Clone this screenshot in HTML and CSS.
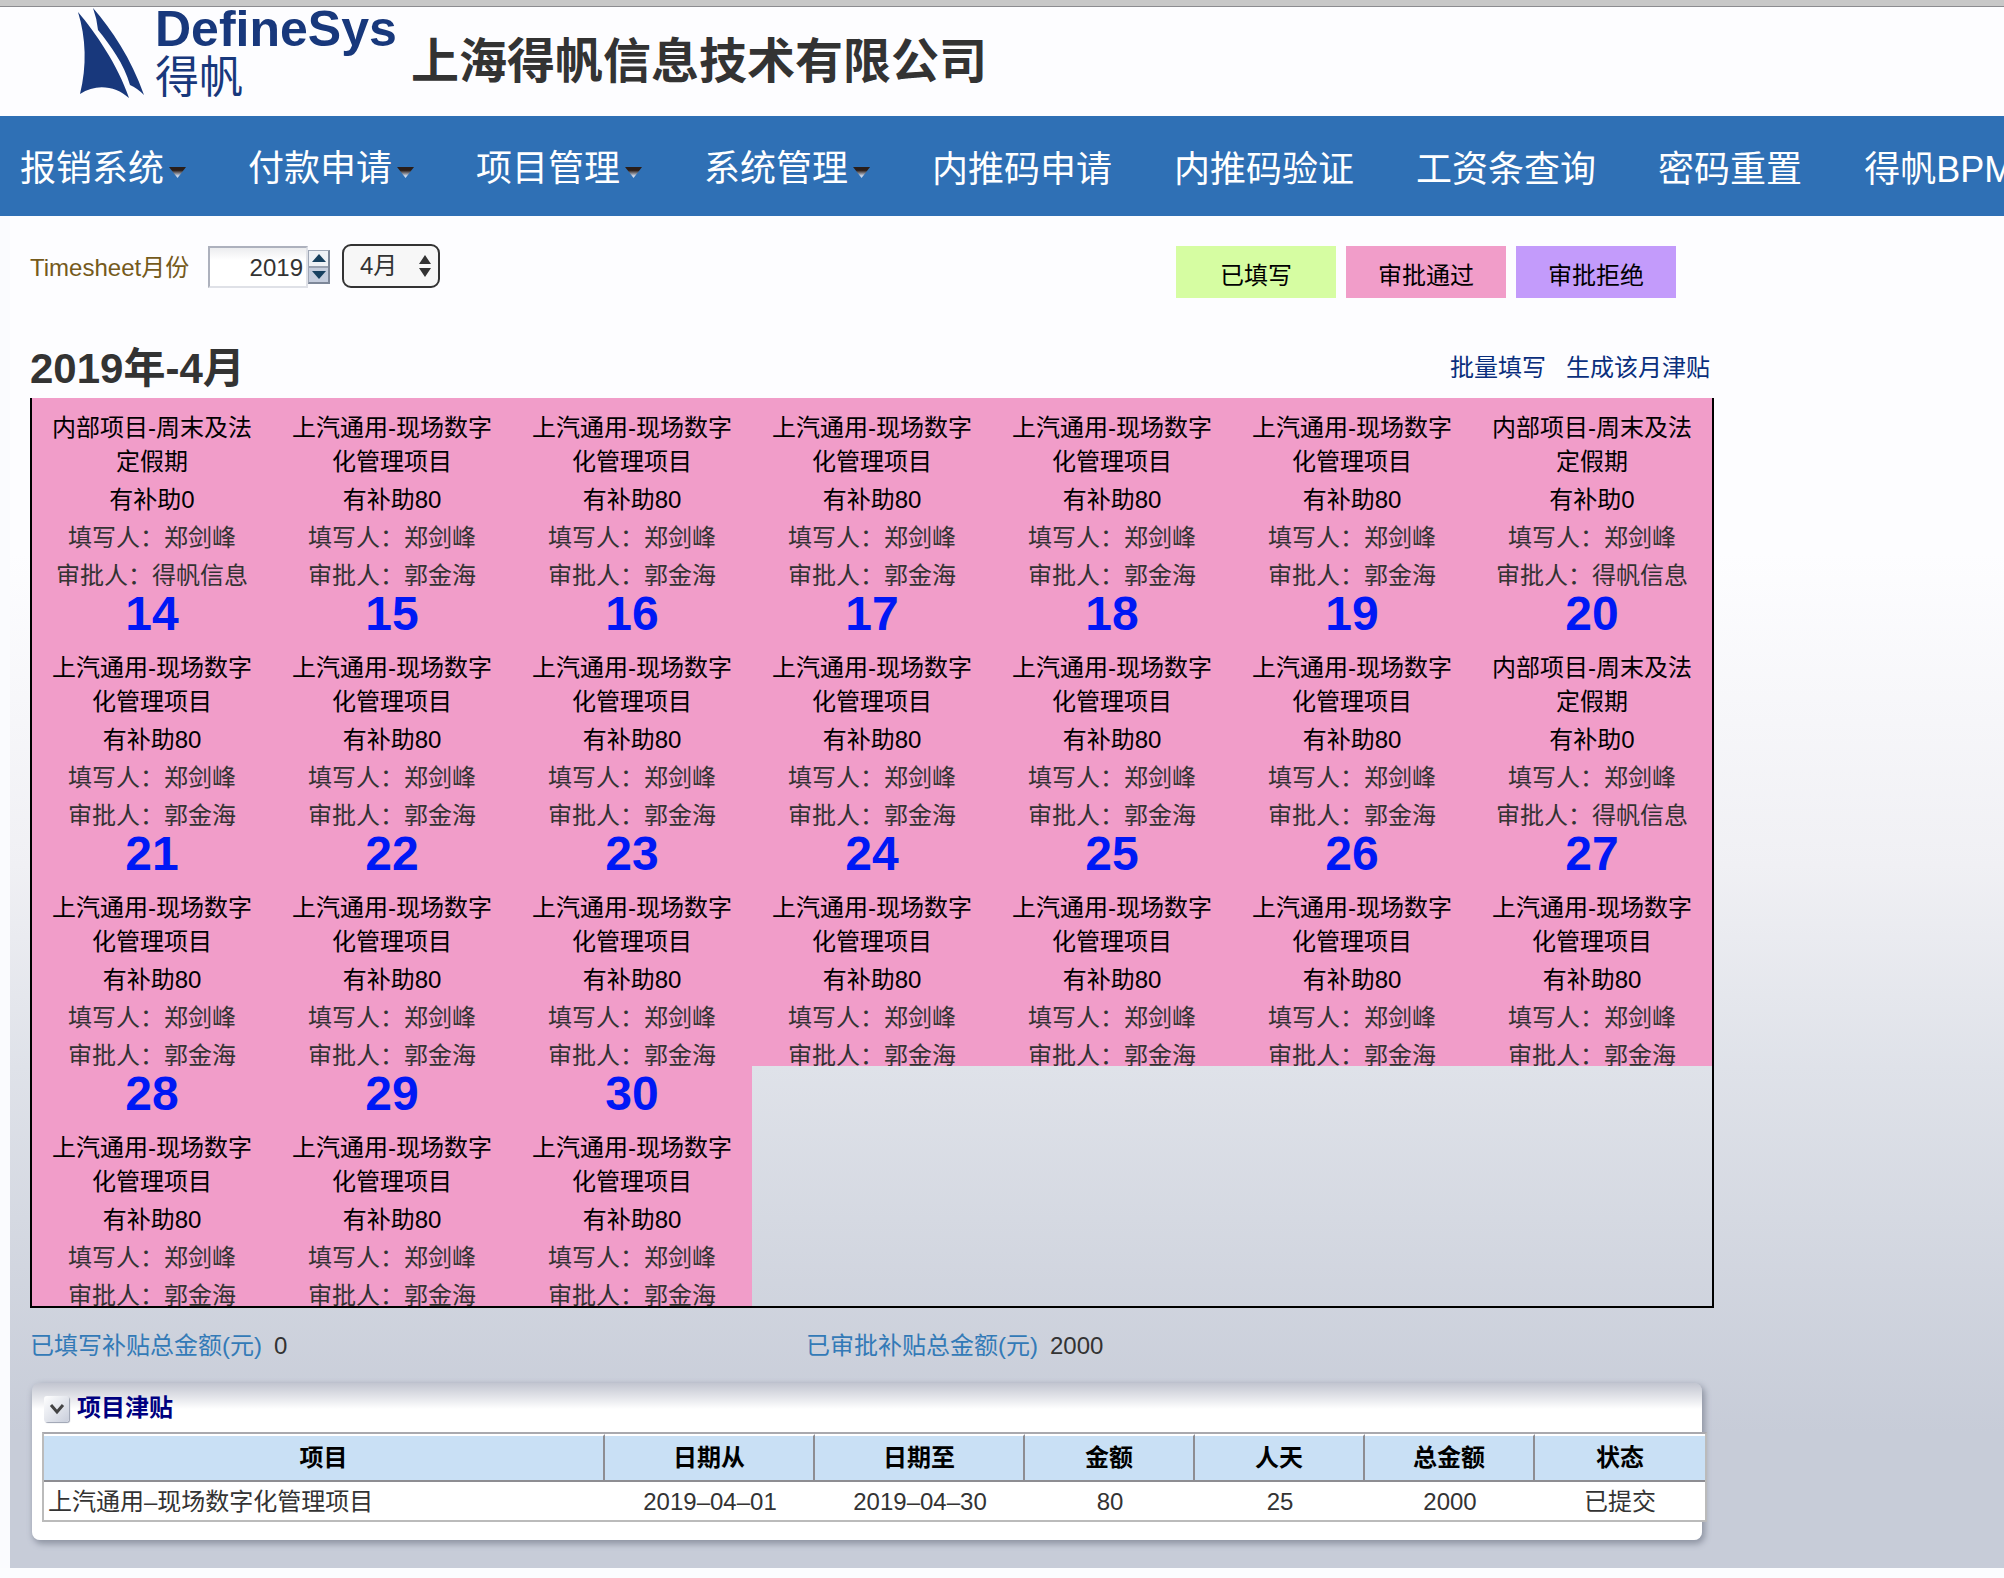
FILE: index.html
```html
<!DOCTYPE html>
<html lang="zh-CN">
<head>
<meta charset="utf-8">
<title>Timesheet</title>
<link rel="stylesheet" href="styles.css">
</head>
<body>
<header class="header">
  <div class="logo">
    <svg class="sail" viewBox="0 0 66 90" aria-hidden="true"><path d="M0 4 C17 24 40 57 51 90 C38 78 18 75 2 86 C9 58 8 30 0 4Z M15 0 C34 22 53 50 66 87 Q59 80 52 77 C46 56 33 38 20 22 Q19 11 15 0Z"/></svg>
    <div class="wordmark"><span class="latin">DefineSys</span><span class="han">得帆</span></div>
  </div>
  <h1 class="company">上海得帆信息技术有限公司</h1>
</header>
<nav class="nav">
  <a class="drop" href="#">报销系统<i></i></a>
  <a class="drop" href="#">付款申请<i></i></a>
  <a class="drop" href="#">项目管理<i></i></a>
  <a class="drop" href="#">系统管理<i></i></a>
  <a href="#">内推码申请</a>
  <a href="#">内推码验证</a>
  <a href="#">工资条查询</a>
  <a href="#">密码重置</a>
  <a href="#">得帆BPM</a>
</nav>
<main class="main">
  <div class="content">
    <div class="toolbar">
      <label class="label" for="year">Timesheet月份</label>
      <input class="year" id="year" type="text" value="2019">
      <div class="spinner">
        <button type="button" aria-label="+"><svg viewBox="0 0 14 8"><path d="M7 0L14 8H0Z"/></svg></button>
        <button type="button" class="down" aria-label="-"><svg viewBox="0 0 14 8"><path d="M0 0H14L7 8Z"/></svg></button>
      </div>
      <div class="month">
        <select aria-label="月"><option>4月</option></select>
        <svg viewBox="0 0 12 22"><path d="M6 0L12 9H0Z M0 13H12L6 22Z"/></svg>
      </div>
      <div class="legend"><span class="filled">已填写</span><span class="approved">审批通过</span><span class="rejected">审批拒绝</span></div>
    </div>
    <div class="cal-head">
      <h2>2019年-4月</h2>
      <div class="actions"><a href="#">批量填写</a><a href="#">生成该月津贴</a></div>
    </div>
    <div class="calendar" id="calendar"></div>
    <div class="totals">
      <p><span>已填写补贴总金额(元)</span>0</p>
      <p><span>已审批补贴总金额(元)</span>2000</p>
    </div>
    <section class="panel">
      <div class="panel-head">
        <button type="button" class="toggle" aria-label="项目津贴"><svg viewBox="0 0 16 12"><path d="M2 2L8 9L14 2"/></svg></button>
        <h3>项目津贴</h3>
      </div>
      <table class="table">
        <colgroup><col><col class="date"><col class="date"><col class="num"><col class="num"><col class="num"><col class="num"></colgroup>
        <thead><tr><th>项目</th><th>日期从</th><th>日期至</th><th>金额</th><th>人天</th><th>总金额</th><th>状态</th></tr></thead>
        <tbody><tr><td>上汽通用–现场数字化管理项目</td><td>2019–04–01</td><td>2019–04–30</td><td>80</td><td>25</td><td>2000</td><td>已提交</td></tr></tbody>
      </table>
    </section>
  </div>
</main>
<script src="calendar.js"></script>
</body>
</html>
```
FILE: styles.css
```css
* { box-sizing: border-box; }
body {
  margin: 0;
  padding-bottom: 10px;
  background: #fbfcfe;
  color: #333;
  font: 24px/34px "Liberation Sans", "Noto Sans CJK SC", sans-serif;
  overflow-x: hidden;
}
h1, h2, h3, p { margin: 0; }
a { text-decoration: none; }
button { padding: 0; border: 0; }

.header {
  display: flex;
  gap: 10px;
  height: 116px;
  padding: 2px 0 0 78px;
  border-top: 6px solid #c8c8c8;
  background: #fdfdff;
  box-shadow: inset 0 1px #8c8c90;
}
.logo { display: flex; gap: 11px; width: 323px; color: #18387c; }
.sail { width: 66px; height: 90px; fill: #18387c; }
.wordmark { display: flex; flex-direction: column; }
.latin { font: bold 50px/42px "Liberation Sans", sans-serif; }
.han { font-size: 44px; line-height: 56px; }
.company { font-size: 48px; line-height: 108px; white-space: nowrap; }

.nav {
  display: flex;
  gap: 62px;
  height: 100px;
  padding-left: 20px;
  background: #2f70b5;
  overflow: hidden;
}
.nav a { flex: none; color: #fff; font-size: 36px; line-height: 108px; }
.nav .drop { display: flex; align-items: flex-start; gap: 5px; line-height: 106px; }
.nav i {
  width: 17px;
  height: 11px;
  margin-top: 51px;
  background: linear-gradient(#2a1d18 30%, #c9d6ea 80%);
  clip-path: polygon(0 0, 100% 0, 50% 100%);
}

.main {
  margin-left: 10px;
  padding: 28px 20px 28px;
  background: linear-gradient(#fdfdff 0%, #fdfdff 25%, #f0f0f4 48%, #dfe2e9 63%, #c7ccd8 90%);
  box-shadow: -10px 0 #fafbfe;
}
.content { max-width: 1684px; }
.toolbar { display: flex; height: 54px; }
.label { width: 178px; line-height: 48px; color: #755a1c; }
.year {
  width: 100px;
  height: 42px;
  margin-top: 2px;
  padding: 2px 3px 0 5px;
  border: 2px solid #dfe1e7;
  border-top-color: #adb1bd;
  border-left-color: #adb1bd;
  background: linear-gradient(#ecedef, #fff 12px);
  color: #333;
  font: inherit;
  text-align: right;
}
.spinner { display: flex; flex-direction: column; width: 22px; height: 34px; margin: 6px 12px 0 0; border: 2px solid #7d8798; border-left: 1px solid #9fa7b6; border-top: 1px solid #9fa7b6; }
.spinner button { display: flex; flex: 1; align-items: center; justify-content: center; background: #eef1f6; }
.spinner .down { border-top: 2px solid #98a1b1; background: #c5cddd; }
.spinner svg { width: 14px; height: 8px; fill: #17405f; }
.month { position: relative; width: 98px; height: 44px; }
.month select {
  width: 100%;
  height: 100%;
  padding: 0 16px;
  appearance: none;
  border: 2px solid #333;
  border-radius: 9px;
  background: #f7f7f7;
  color: #333;
  font: inherit;
}
.month svg { position: absolute; top: 11px; right: 9px; width: 12px; height: 22px; fill: #333; pointer-events: none; }
.legend { display: flex; gap: 10px; margin: 2px 38px 0 auto; }
.legend span { width: 160px; height: 52px; color: #000; line-height: 60px; text-align: center; }
.filled { background: #d6fda2; }
.approved { background: #f19dc9; }
.rejected { background: #c39bfb; }

.cal-head { display: flex; justify-content: space-between; height: 100px; padding-top: 40px; }
.cal-head h2 { font-size: 42px; line-height: 62px; }
.actions { display: flex; gap: 20px; padding-right: 4px; line-height: 60px; }
.actions a { color: #0a2f7d; }

.calendar {
  display: grid;
  grid-template-columns: repeat(7, 1fr);
  border: 2px solid #000;
  border-top: 0;
}
.day { height: 240px; overflow: hidden; background: #f19dc9; text-align: center; }
.day.cut { height: 188px; padding-top: 13px; }
.day b { display: block; height: 65px; color: #0018f5; font-size: 48px; line-height: 56px; }
.day p { line-height: 38px; }
.day .title { width: 210px; margin: 0 auto 2px; color: #000; line-height: 34px; }
.day .sub { color: #000; }

.totals { display: grid; grid-template-columns: 776px 1fr; padding: 21px 0 17px; }
.totals span { margin-right: 12px; color: #337ab7; }

.panel {
  margin: 3px 12px 0 2px;
  padding: 8px 0 18px 10px;
  border-radius: 8px;
  background: linear-gradient(#c2c5d0, #fff 26px);
  box-shadow: 2px 3px 6px 1px #8f95a3;
}
.panel-head { display: flex; align-items: center; gap: 8px; height: 41px; padding: 0 3px 7px 2px; }
.toggle { display: flex; align-items: center; justify-content: center; width: 25px; height: 26px; margin-top: 2px; border-radius: 3px; background: linear-gradient(135deg, #fff, #c9cedb); box-shadow: 1px 1px 1px #9aa0b0; }
.toggle svg { width: 16px; height: 12px; fill: none; stroke: #444; stroke-width: 3; }
.panel h3 { color: #000080; font-size: 24px; }
.table { width: calc(100% + 5px); table-layout: fixed; border: 2px solid #bbb; border-top-color: #a9a9ae; border-spacing: 0; background: #fff; }
.date { width: 210px; }
.num { width: 170px; }
.table th { height: 48px; padding: 0; border-top: 2px solid #fff; border-right: 2px solid #8d8d92; border-bottom: 2px solid #8d8d92; background: #c9e0f5; background-clip: padding-box; color: #000; }
.table th:last-child { border-right: 0; }
.table td { height: 38px; padding: 2px 4px 0; text-align: center; }
.table td:first-child { text-align: left; }
```
FILE: calendar.js
```js
var calendar = document.getElementById('calendar');

function addDay(day, holiday, agency, allowance) {
  var cell = document.createElement('div');
  cell.className = day < 14 ? 'day cut' : 'day';
  cell.innerHTML =
    (day < 14 ? '' : '<b>' + day + '</b>') +
    '<p class="title">' + (holiday ? '内部项目-周末及法定假期' : '上汽通用-现场数字化管理项目') + '</p>' +
    '<p class="sub">有补助' + allowance + '</p>' +
    '<p>填写人：郑剑峰</p>' +
    '<p>审批人：' + (agency ? '得帆信息' : '郭金海') + '</p>';
  calendar.appendChild(cell);
}

for (var day = 7; day <= 30; day++) {
  var off = day === 7 || day === 13 || day === 20;
  addDay(day, off, off, off ? 0 : 80);
}
```
